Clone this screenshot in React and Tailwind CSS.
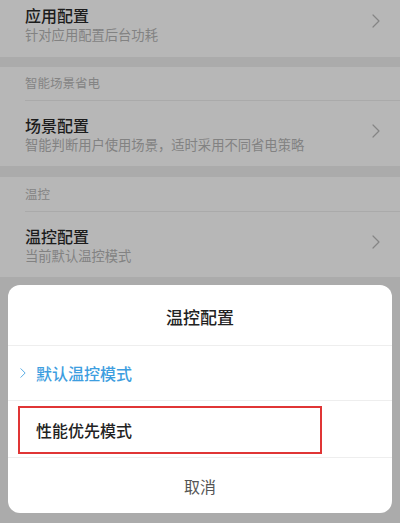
import React from 'react';

const Chevron = ({ className }) => (
    <svg viewBox="0 0 8 14" className={className} fill="none">
        <path d="M1 1l6 6-6 6" stroke="currentColor" strokeWidth="1.2" strokeLinecap="round" strokeLinejoin="round" />
    </svg>
);

const SettingRow = ({ title, desc, height, pad }) => (
    <div className={`flex items-start justify-between px-[25px] bg-[#b7b7b7] ${height} ${pad}`}>
        <div className="flex flex-col">
            <span className="text-[16px] leading-[20px] font-medium text-[#1c1c1c]">{title}</span>
            <span className="text-[13.3px] leading-[20px] text-[#828282]">{desc}</span>
        </div>
        <Chevron className="w-[8px] h-[14px] mt-[9px] mr-[-5px] text-[#858585]" />
    </div>
);

const SectionHeader = ({ label, height }) => (
    <div className={`flex items-center px-[25px] bg-[#b7b7b7] ${height}`}>
        <span className="text-[12.5px] text-[#848484]">{label}</span>
    </div>
);

export default function App() {
    return (
        <div
            className="w-[400px] h-[523px] overflow-hidden bg-[#ababab] flex flex-col"
            style={{ fontFamily: '"Noto Sans CJK SC", "Noto Sans", sans-serif' }}
        >
            {/* dimmed settings list */}
            <SettingRow title="应用配置" desc="针对应用配置后台功耗" height="h-[57px]" pad="pt-[5px]" />
            <div className="h-[10px] shrink-0" />
            <SectionHeader label="智能场景省电" height="h-[33px]" />
            <div className="h-px bg-[#b7b7b7] pl-[25px]"><div className="h-px bg-[#aaaaaa]" /></div>
            <SettingRow title="场景配置" desc="智能判断用户使用场景，适时采用不同省电策略" height="h-[65px]" pad="pt-[14px]" />
            <div className="h-[11px] shrink-0" />
            <SectionHeader label="温控" height="h-[34px]" />
            <div className="h-px bg-[#b7b7b7] pl-[25px]"><div className="h-px bg-[#aaaaaa]" /></div>
            <SettingRow title="温控配置" desc="当前默认温控模式" height="h-[65px]" pad="pt-[14px]" />

            {/* bottom sheet dialog */}
            <div className="px-[8px] pt-[8px] pb-[10px]">
                <div className="bg-white rounded-[12px] h-[228px] flex flex-col overflow-hidden">
                    <div className="h-[61px] flex items-center justify-center pt-[4px] border-b border-[#eeeeee]">
                        <span className="text-[17px] font-medium text-[#222222]">温控配置</span>
                    </div>
                    <div className="h-[55px] flex items-center pl-[12px] border-b border-[#eeeeee]">
                        <Chevron className="w-[6px] h-[10px] text-[#3d9ee0]" />
                        <span className="ml-[10px] text-[16px] text-[#3d9ee0] font-medium">默认温控模式</span>
                    </div>
                    <div className="h-[57px] flex items-center px-[10px] border-b border-[#eeeeee]">
                        <div className="w-[304px] h-[48px] border-2 border-[#e03535] flex items-center pl-[16px] mt-[1px]">
                            <span className="text-[16px] text-[#222222] font-medium">性能优先模式</span>
                        </div>
                    </div>
                    <div className="flex-1 flex items-center justify-center">
                        <span className="text-[16px] text-[#555555]">取消</span>
                    </div>
                </div>
            </div>
        </div>
    );
}
